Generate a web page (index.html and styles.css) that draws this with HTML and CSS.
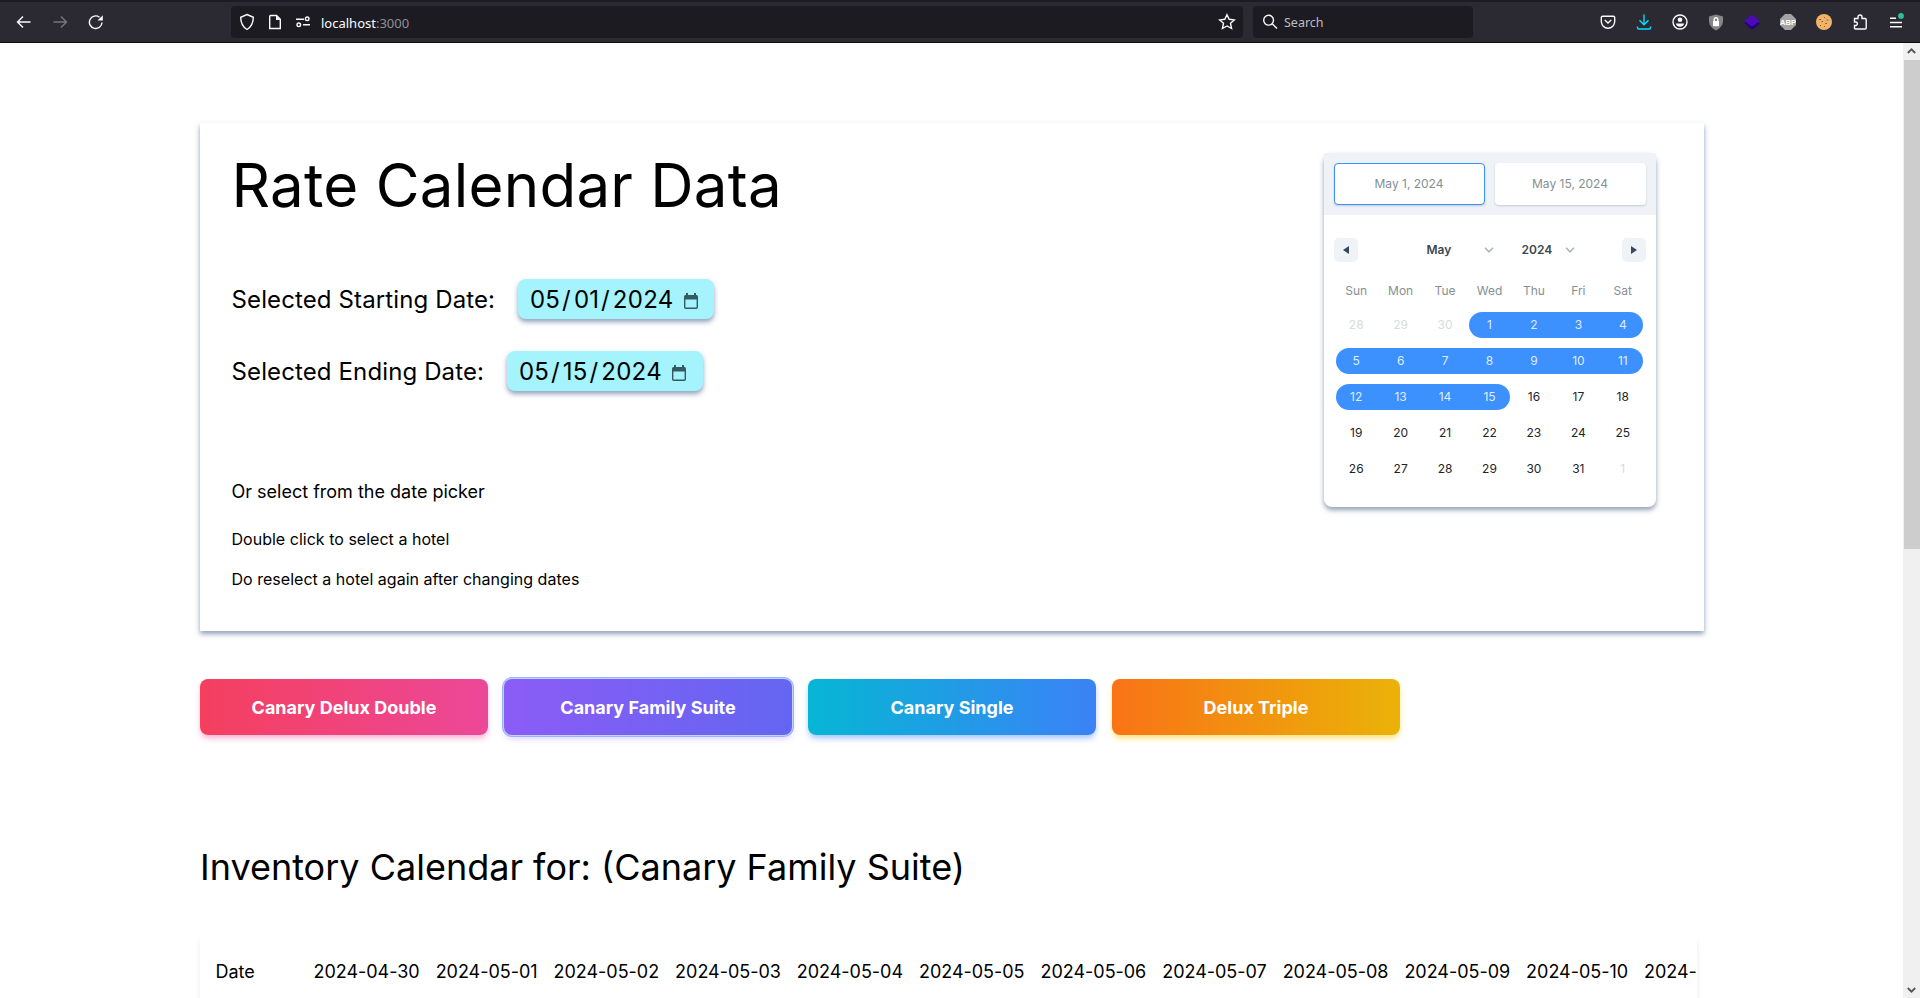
FILE: index.html
```
<!DOCTYPE html>
<html lang="en">
<head>
<meta charset="utf-8">
<title>Rate Calendar</title>
<link rel="stylesheet" href="styles.css">
</head>
<body>
<header class="chrome">
  <nav class="nav">
    <span class="tool"><svg width="16" height="16" viewBox="0 0 16 16"><path d="M14.5 8H2M7 2.5 1.5 8 7 13.5"/></svg></span>
    <span class="tool dim"><svg width="16" height="16" viewBox="0 0 16 16"><path d="M1.500 8H14M9 2.500 14.500 8 9 13.500"/></svg></span>
    <span class="tool"><svg width="16" height="16" viewBox="0 0 16 16"><path d="M14 8.500A6.300 6.300 0 1 1 11.500 3.200"/><path class="solid" d="M14.800 1.200V6.500H9.500Z"/></svg></span>
  </nav>
  <div class="urlbar">
    <svg width="16" height="18" viewBox="0 0 16 18"><path d="M8 1.500 14.300 4.300C14.300 9.500 12.600 13.800 8 16.500 3.400 13.800 1.700 9.500 1.700 4.300Z"/></svg>
    <svg width="16" height="16" viewBox="0 0 16 16"><path d="M3.700 1.500H9.500L13.300 5.300V14.500H2.700V2.500Q2.700 1.500 3.700 1.500Z"/><path class="solid" d="M9 1.500V6H13.300Z"/></svg>
    <svg width="16" height="16" viewBox="0 0 16 16"><path d="M1 5.200H9M8 10.800H15"/><circle cx="12.200" cy="4.800" r="1.800"/><circle cx="3.800" cy="10.800" r="1.800"/></svg>
    <span class="url">localhost<i>:3000</i></span>
    <svg class="star" width="18" height="18" viewBox="0 0 18 18"><path d="M9 1.700 11.200 6.300 16.300 6.900 12.500 10.300 13.600 15.500 9 13 4.400 15.500 5.500 10.300 1.700 6.900 6.800 6.300Z"/></svg>
  </div>
  <div class="searchbar">
    <svg width="16" height="16" viewBox="0 0 16 16"><circle cx="6.600" cy="6.200" r="4.900"/><path d="M10.200 9.800 15 14.600"/></svg>
    <span>Search</span>
  </div>
  <div class="tools">
    <span class="tool"><svg width="16" height="16" viewBox="0 0 16 16"><path d="M2.700 2.200H13.300Q14.700 2.200 14.700 3.600V7.500A6.700 6.700 0 0 1 1.300 7.500V3.600Q1.300 2.200 2.700 2.200ZM4.800 6 8 9 11.200 6"/></svg></span>
    <span class="tool cyan"><svg width="16" height="16" viewBox="0 0 16 16"><path d="M8 0.500V10.500M3.500 6.200 8 10.700 12.500 6.200M1.500 12.500V13.800Q1.500 15 2.700 15H13.300Q14.500 15 14.500 13.800V12.500"/></svg></span>
    <span class="tool"><svg width="16" height="16" viewBox="0 0 16 16"><circle cx="8" cy="8" r="7"/><circle class="solid" cx="8" cy="5.800" r="2.300"/><path class="solid" d="M3.800 9.500H12.200Q11 12.800 8 12.800T3.800 9.500Z"/></svg></span>
    <span class="tool"><svg width="16" height="17" viewBox="0 0 16 17"><path class="gray" d="M8 .5 15 2.500V7Q15 13 8 16.500 1 13 1 7V2.500Z"/><path class="white" d="M5 7H11V12.200H5Z"/><path d="M6.200 7V5.500A1.800 1.800 0 0 1 9.800 5.500V7"/></svg></span>
    <span class="tool"><svg width="16" height="17" viewBox="0 0 16 17"><path class="navy" d="M0 8.500 8 4 16 9.500 8 16Z"/><path class="purple" d="M8 .5 16 7 8 12.500 0 7Z"/></svg></span>
    <span class="tool"><svg width="16" height="16" viewBox="0 0 16 16"><path class="silver" d="M5 0H11L16 5V11L11 16H5L0 11V5Z"/><text class="abp" x="8" y="10.800">ABP</text></svg></span>
    <span class="tool"><svg width="16" height="16" viewBox="0 0 16 16"><circle class="cookie" cx="8" cy="8" r="8"/><path class="bite" d="M3 5h2v1H3zM8 3h1v1H8zM10.500 5.500h2v1h-2zM5.500 7h1.500v1H5.500zM9 9h2v1H9zM4 11h1v1H4zM8 12h1v1H8z"/></svg></span>
    <span class="tool"><svg width="16" height="16" viewBox="0 0 16 16"><path d="M2.500 4.500H6V3A2 2 0 0 1 10 3V4.500H13Q14.200 4.500 14.200 5.700V14Q14.200 15 13.200 15H3.500Q2.500 15 2.500 14V11.500H4A1.800 1.800 0 0 0 4 8H2.500Z"/></svg></span>
    <span class="tool"><svg width="20" height="18" viewBox="0 0 20 18"><path d="M4 5.300H10M4 9.500H16M4 13.700H16"/><circle class="green" cx="15" cy="2.900" r="2.900"/></svg></span>
  </div>
</header>
<div class="viewport">
  <main class="page">
    <section class="card">
      <div class="intro">
        <h1>Rate Calendar Data</h1>
        <div class="field"><span>Selected Starting Date:</span><span class="date"><b>05</b>/<b>01</b>/<b>2024</b><svg width="16" height="18" viewBox="0 0 16 18"><path d="M1.700 5V15.300Q1.700 16.300 2.700 16.300H13.300Q14.300 16.300 14.300 15.300V5"/><path class="fill" d="M1 7.500V4.500Q1 3 2.500 3H3V1H5V3H11V1H13V3H13.500Q15 3 15 4.500V7.500Z"/></svg></span></div>
        <div class="field"><span>Selected Ending Date:</span><span class="date"><b>05</b>/<b>15</b>/<b>2024</b><svg width="16" height="18" viewBox="0 0 16 18"><path d="M1.700 5V15.300Q1.700 16.300 2.700 16.300H13.300Q14.300 16.300 14.300 15.300V5"/><path class="fill" d="M1 7.500V4.500Q1 3 2.500 3H3V1H5V3H11V1H13V3H13.500Q15 3 15 4.500V7.500Z"/></svg></span></div>
        <p class="or">Or select from the date picker</p>
        <p class="hint">Double click to select a hotel</p>
        <p class="hint">Do reselect a hotel again after changing dates</p>
      </div>
      <div class="picker">
        <div class="range"><span class="active">May 1, 2024</span><span>May 15, 2024</span></div>
        <div class="month-bar">
          <span class="arrow"><svg width="6" height="8" viewBox="0 0 6 8"><path d="M6 0V8L0 4Z"/></svg></span>
          <div class="selects">
            <span class="month">May<svg width="10" height="6" viewBox="0 0 10 6"><path d="M1 .8 5 4.800 9 .8"/></svg></span>
            <span class="year">2024<svg width="10" height="6" viewBox="0 0 10 6"><path d="M1 .8 5 4.800 9 .8"/></svg></span>
          </div>
          <span class="arrow"><svg width="6" height="8" viewBox="0 0 6 8"><path d="M0 0V8L6 4Z"/></svg></span>
        </div>
        <div class="week names"><span>Sun</span><span>Mon</span><span>Tue</span><span>Wed</span><span>Thu</span><span>Fri</span><span>Sat</span></div>
        <div class="week"><span class="off">28</span><span class="off">29</span><span class="off">30</span><span class="in first">1</span><span class="in">2</span><span class="in">3</span><span class="in last">4</span></div>
        <div class="week"><span class="in first">5</span><span class="in">6</span><span class="in">7</span><span class="in">8</span><span class="in">9</span><span class="in">10</span><span class="in last">11</span></div>
        <div class="week"><span class="in first">12</span><span class="in">13</span><span class="in">14</span><span class="in last">15</span><span>16</span><span>17</span><span>18</span></div>
        <div class="week"><span>19</span><span>20</span><span>21</span><span>22</span><span>23</span><span>24</span><span>25</span></div>
        <div class="week"><span>26</span><span>27</span><span>28</span><span>29</span><span>30</span><span>31</span><span class="off">1</span></div>
      </div>
    </section>
    <div class="hotels">
      <button class="rose">Canary Delux Double</button>
      <button class="violet">Canary Family Suite</button>
      <button class="sky">Canary Single</button>
      <button class="orange">Delux Triple</button>
    </div>
    <h2>Inventory Calendar for: (Canary Family Suite)</h2>
    <section class="inventory">
      <span class="rowname">Date</span><span>2024-04-30</span><span>2024-05-01</span><span>2024-05-02</span><span>2024-05-03</span><span>2024-05-04</span><span>2024-05-05</span><span>2024-05-06</span><span>2024-05-07</span><span>2024-05-08</span><span>2024-05-09</span><span>2024-05-10</span><span>2024-</span>
    </section>
  </main>
  <aside class="scrollbar">
    <svg width="9" height="6" viewBox="0 0 9 6"><path d="M.8 5 4.500 1.300 8.200 5"/></svg>
    <div class="thumb"></div>
    <svg class="down" width="9" height="6" viewBox="0 0 9 6"><path d="M.8 1 4.500 4.700 8.200 1"/></svg>
  </aside>
</div>
</body>
</html>
```
FILE: styles.css
```
* { box-sizing: border-box; margin: 0; padding: 0; }
body { height: 998px; overflow: hidden; background: #fff; color: #000; font-family: Inter, sans-serif; display: flex; flex-direction: column; }
svg { display: block; flex: none; fill: none; stroke: currentColor; }

/* Browser toolbar */
.chrome { height: 43px; flex: none; display: flex; align-items: center; background: #2b2a33; border-top: 2px solid #1c1b22; border-bottom: 1px solid #0c0c0d; color: #fbfbfe; padding: 0 6px; font: 13px "Noto Sans", sans-serif; }
.chrome svg { stroke-width: 1.4; }
.nav, .tools { display: flex; }
.tool { width: 36px; height: 32px; display: flex; align-items: center; justify-content: center; }
.dim { color: #77767d; }
.cyan { color: #00ddff; }
.urlbar, .searchbar { height: 32px; margin-top: 0; border-radius: 4px; background: #1c1b22; display: flex; align-items: center; }
.urlbar { width: 1012px; margin-left: 117px; padding: 0 7px 0 8px; gap: 12px; }
.url { font-size: 13px; margin-left: -2px; padding-top: 1px; }
.url i { font-style: normal; color: #8f8f98; }
.star { margin-left: auto; }
.searchbar { width: 220px; margin-left: 10px; padding-left: 9px; gap: 6px; color: #fbfbfe; }
.searchbar span { color: #bdbdc4; font-size: 12.500px; padding-top: 1px; }
.tools { margin-left: auto; }
.solid { fill: currentColor; stroke: none; }
.gray { fill: #858585; stroke: none; }
.white { fill: #fff; stroke: none; }
.navy { fill: #24007a; stroke: none; }
.purple { fill: #4a0bb5; stroke: none; }
.silver { fill: #a3a3a3; stroke: none; }
.abp { font: bold 7.500px "Liberation Sans", sans-serif; fill: #fff; stroke: none; text-anchor: middle; }
.cookie { fill: #efb467; stroke: none; }
.bite { fill: #9b6231; stroke: none; }
.green { fill: #2ac3a2; stroke: none; }

.viewport { flex: 1; min-height: 0; display: flex; }
.page { flex: 1; min-width: 0; padding: 80px 199px 0 200px; overflow: hidden; }

/* Date selection card */
.card { height: 508px; padding: 30px 48px 0 31.500px; display: flex; justify-content: space-between; box-shadow: 0 3px 5px rgba(38, 67, 120, .5); }
h1 { font-weight: 400; font-size: 60px; line-height: 64px; letter-spacing: .25px; margin-bottom: 62px; }
.field { display: flex; align-items: center; height: 40px; margin-bottom: 32px; font-size: 24px; letter-spacing: .12px; gap: 23px; }
.date { width: 196px; height: 40px; padding-left: 12px; display: flex; align-items: center; background: #a5f3fc; border-radius: 8px; box-shadow: 0 3px 5px rgba(38, 67, 120, .5); }
.date b { font-weight: 400; margin: 0 2px 0 3px; }
.date b:first-child { margin-left: 0; }
.date b:nth-child(3) { letter-spacing: .3px; }
.date svg { color: #365a61; stroke-width: 1.4; margin: 3px 0 0 7px; }
.fill { fill: currentColor; stroke: none; }
.or { font-size: 18px; line-height: 28px; margin-top: 87px; letter-spacing: 0; }
.hint { font-size: 16px; line-height: 24px; margin-top: 16px; letter-spacing: .02px; }
.or + .hint { margin-top: 21px; }

.picker { width: 332px; height: 354px; background: #fff; border-radius: 8px; box-shadow: 0 3px 5px rgba(38, 67, 100, .5); font-size: 12px; color: #1d2429; }
.range { height: 62px; padding: 10px; display: flex; gap: 10px; background: #eff2f7; color: #849095; }
.range span { flex: 1; display: flex; align-items: center; justify-content: center; padding: 0 1px 2px 0; background: #fff; border: 1px solid transparent; border-radius: 4px; box-shadow: 0 1px 2px rgba(35, 57, 66, .21); }
.range .active { border-color: #3d91ff; }
.month-bar { height: 60px; margin-top: 5px; padding: 0 10px; display: flex; align-items: center; justify-content: space-between; }
.arrow { width: 24px; height: 24px; border-radius: 5px; background: #eff2f7; display: flex; align-items: center; justify-content: center; }
.arrow path { fill: #34495e; stroke: none; }
.selects { display: flex; gap: 28px; padding: 0 0 1px 21px; font-weight: 600; color: #3e484f; }
.selects span { display: flex; align-items: center; justify-content: space-between; }
.selects svg { color: #aeb5b9; stroke-width: 1.6; }
.month { width: 67px; }
.year { width: 53px; }
.week { display: grid; grid-template-columns: repeat(7, 1fr); padding: 5px 11px 5px 10px; height: 36px; line-height: 26px; text-align: center; }
.names { margin-top: -9px; padding-top: 7px; color: #849095; height: 36px; }
.off { color: #d5dce0; }
.in { background: #3d91ff; color: rgba(255, 255, 255, .85); }
.first { border-radius: 13px 0 0 13px; margin-left: 2px; padding-right: 2px; }
.last { border-radius: 0 13px 13px 0; margin-right: 2px; padding-left: 2px; }

/* Hotel buttons */
.hotels { display: flex; gap: 16px; margin-top: 48px; }
.hotels button { width: 288px; height: 56px; border: 0; border-radius: 8px; color: #fff; font: 700 18px Inter, sans-serif; }
.rose { background: linear-gradient(90deg, #f43f5e, #ec4899); box-shadow: 0 4px 6px -1px rgba(236, 72, 153, .45); }
.hotels .violet { background: linear-gradient(90deg, #8b5cf6, #6366f1); box-shadow: 0 0 0 1px #c3d3fb, 0 0 0 2px #94b4f8, 0 4px 6px rgba(139, 92, 246, .25); }
.sky { background: linear-gradient(90deg, #06b6d4, #3b82f6); box-shadow: 0 4px 6px -1px rgba(59, 130, 246, .5); }
.orange { background: linear-gradient(90deg, #f97316, #eab308); box-shadow: 0 4px 6px -1px rgba(250, 204, 21, .6); }

h2 { font-weight: 400; font-size: 36px; line-height: 40px; margin-top: 112px; }
.inventory { width: 1497px; height: 120px; margin-top: 50px; padding: 21px 0 0 15.500px; display: flex; gap: 16px; overflow: hidden; font-size: 18px; line-height: 28px; letter-spacing: -.03px; white-space: nowrap; box-shadow: 0 4px 6px rgba(0, 0, 0, .08); }
.rowname { width: 82px; flex: none; }

.scrollbar { width: 17px; background: #f0f0f0; color: #555; padding: 5px 0; display: flex; flex-direction: column; align-items: center; }
.scrollbar svg { stroke-width: 1.8; }
.thumb { width: 16px; height: 489px; margin-top: 6px; background: #cdcdcd; }
.down { margin-top: auto; }
```
